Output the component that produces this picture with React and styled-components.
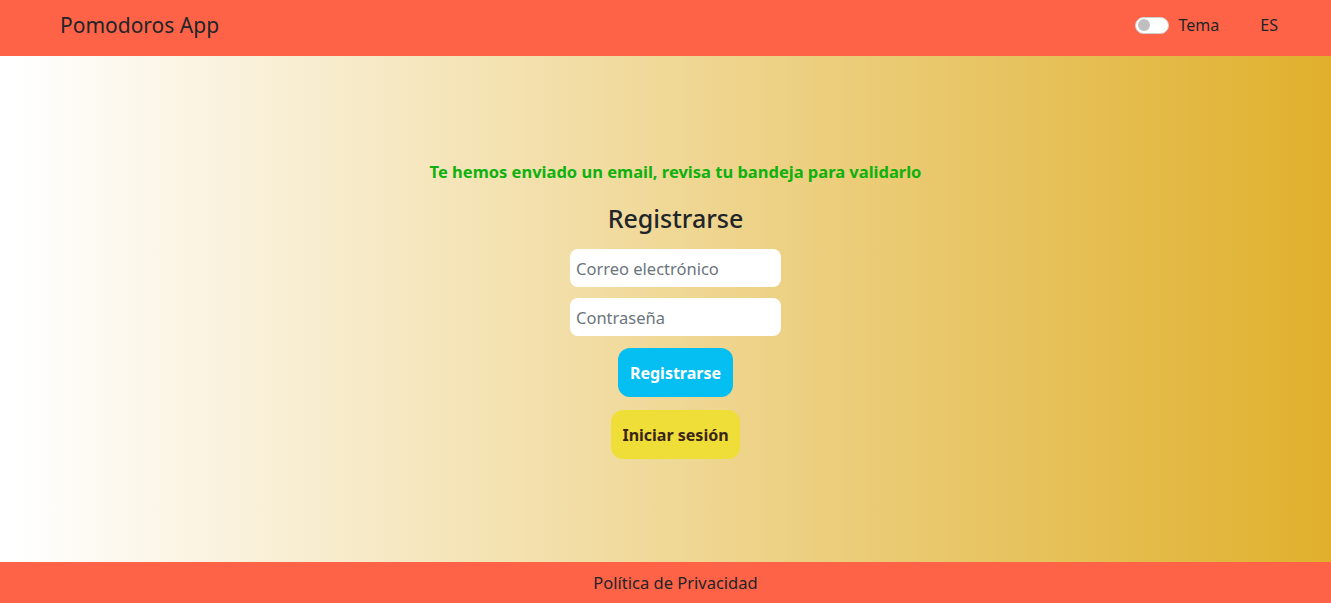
import React from "react";
import styled, { createGlobalStyle } from "styled-components";

const GlobalStyle = createGlobalStyle`
    * {
        box-sizing: border-box;
    }
    body {
        margin: 0;
        font-family: "Noto Sans", "Open Sans", sans-serif;
        color: #212529;
    }
`;

const Page = styled.div`
    display: flex;
    flex-direction: column;
    height: 603px;
`;

const Navbar = styled.nav`
    height: 56px;
    flex-shrink: 0;
    background: #ff6347;
    display: flex;
    align-items: center;
    justify-content: space-between;
    padding: 0 53px 6px 60px;
`;

const Brand = styled.span`
    font-size: 21px;
    color: #212529;
`;

const NavRight = styled.div`
    display: flex;
    align-items: center;
`;

const Switch = styled.span`
    width: 34px;
    height: 17px;
    border-radius: 9px;
    background: #fff;
    border: 1px solid #d0d0d0;
    display: flex;
    align-items: center;
    padding-left: 2px;
    margin-right: 10px;
    &::before {
        content: "";
        width: 12px;
        height: 12px;
        border-radius: 50%;
        background: #bfbfbf;
    }
`;

const NavText = styled.span`
    font-size: 16px;
    color: #212529;
    margin-right: ${props => props.gap || 0}px;
`;

const Main = styled.main`
    flex: 1;
    background: linear-gradient(to right, #ffffff 1%, #e0b02c 100%);
    display: flex;
    flex-direction: column;
    align-items: center;
    padding: 104px 0 0 20px;
`;

const Notice = styled.p`
    margin: 0;
    font-size: 16.5px;
    font-weight: 700;
    color: #0eb10e;
`;

const Heading = styled.h2`
    margin: 20px 0 16px;
    font-size: 25px;
    font-weight: 500;
    line-height: 1.2;
`;

const Form = styled.form`
    display: flex;
    flex-direction: column;
    align-items: center;
`;

const Input = styled.input`
    width: 211px;
    height: 38px;
    border: none;
    border-radius: 8px;
    background: #fff;
    padding: 0 6px;
    margin-bottom: ${props => props.space}px;
    font-family: inherit;
    font-size: 16.5px;
    color: #212529;
    outline: none;
    &::placeholder {
        color: #6c757d;
    }
`;

const Button = styled.button`
    height: 49px;
    padding: 0 ${props => props.pad}px;
    border: none;
    border-radius: 12px;
    background: ${props => props.bg};
    color: ${props => props.fg};
    font-family: inherit;
    font-size: 16px;
    font-weight: 700;
    margin-top: ${props => props.top}px;
    cursor: pointer;
`;

const Footer = styled.footer`
    height: 41px;
    flex-shrink: 0;
    background: #ff6347;
    display: flex;
    align-items: center;
    justify-content: center;
    padding-left: 20px;
    font-size: 16.5px;
`;

export default function App() {
    return (
        <>
            <GlobalStyle />
            <Page>
                <Navbar>
                    <Brand>Pomodoros App</Brand>
                    <NavRight>
                        <Switch />
                        <NavText gap={41}>Tema</NavText>
                        <NavText>ES</NavText>
                    </NavRight>
                </Navbar>
                <Main>
                    <Notice>Te hemos enviado un email, revisa tu bandeja para validarlo</Notice>
                    <Heading>Registrarse</Heading>
                    <Form onSubmit={e => e.preventDefault()}>
                        <Input type="email" placeholder="Correo electrónico" space={11} />
                        <Input type="password" placeholder="Contraseña" space={0} />
                        <Button type="submit" bg="#05bef2" fg="#fff" pad={12} top={12}>Registrarse</Button>
                        <Button type="button" bg="#efde38" fg="#3b2418" pad={11} top={13}>Iniciar sesión</Button>
                    </Form>
                </Main>
                <Footer>Política de Privacidad</Footer>
            </Page>
        </>
    );
}
